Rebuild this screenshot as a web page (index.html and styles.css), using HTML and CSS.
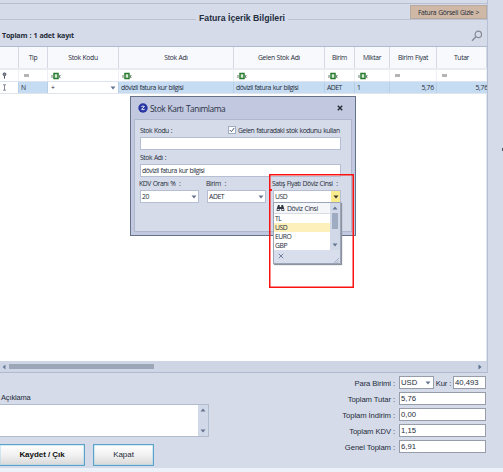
FILE: index.html
```html
<!DOCTYPE html>
<html lang="tr">
<head>
<meta charset="utf-8">
<title>Fatura İçerik Bilgileri</title>
<link rel="stylesheet" href="styles.css">
</head>
<body>
<svg class="defs" aria-hidden="true">
  <symbol id="abc" viewBox="0 0 10 8"><path d="M1 3v3M9.5 3.5h-1v2h1" stroke="#68806c" fill="none"/><rect x="3" y="1.5" width="4" height="5" fill="#d6ecd4" stroke="#287a30" stroke-width="1.5"/></symbol>
  <symbol id="down" viewBox="0 0 6 4"><path d="M.5 .5h5L3 3.5z" fill="currentColor"/></symbol>
  <symbol id="up" viewBox="0 0 6 4"><path d="M.5 3.5h5L3 .5z" fill="currentColor"/></symbol>
</svg>
<div class="app">
  <main class="main">
    <div class="topline"><button class="hide">Fatura Görseli Gizle &gt;</button></div>
    <h1 class="title"><span>Fatura İçerik Bilgileri</span></h1>
    <div class="summary"><b>Toplam : 1 adet kayıt</b>
      <svg class="search" viewBox="0 0 12 12"><circle cx="7.3" cy="4.4" r="3.2" fill="none" stroke="#858a94" stroke-width="1.2"/><path d="M5 6.8L1 10.8" stroke="#858a94" stroke-width="1.4"/></svg>
    </div>
    <section class="grid">
      <div class="row head"><span></span><span>Tip</span><span>Stok Kodu</span><span>Stok Adı</span><span>Gelen Stok Adı</span><span>Birim</span><span>Miktar</span><span>Birim Fiyat</span><span>Tutar</span></div>
      <div class="row filter">
        <span><svg class="pin" viewBox="0 0 5 7"><circle cx="2.5" cy="2.3" r="1.4" fill="#8b919b" stroke="#4b5361"/><path d="M2.5 4v2.6" stroke="#4b5361"/></svg></span>
        <span><i class="eq"></i></span><span><svg class="abc"><use href="#abc"/></svg></span><span><svg class="abc"><use href="#abc"/></svg></span><span><svg class="abc"><use href="#abc"/></svg></span><span><svg class="abc"><use href="#abc"/></svg></span><span><svg class="abc"><use href="#abc"/></svg></span><span><i class="eq"></i></span><span><i class="eq"></i></span>
      </div>
      <div class="row data">
        <span class="plain"><svg class="pin" viewBox="0 0 5 7"><path d="M1 .8h3M1 6.2h3M2.5 1v5" stroke="#6b7380" stroke-width=".8"/></svg></span>
        <span>N</span><span class="plain edit">+<svg class="arrow"><use href="#down"/></svg></span><span>dövizli fatura kur bilgisi</span><span>dövizli fatura kur bilgisi</span><span>ADET</span><span>1</span><span class="num">5,76</span><span class="num last">5,76</span>
      </div>
      <div class="space"></div>
      <div class="hscroll"><svg viewBox="0 0 4 6"><path d="M3.5 .5v5L.5 3z" fill="#687f9d"/></svg><i class="thumb"></i><svg viewBox="0 0 4 6"><path d="M.5 .5v5L3.5 3z" fill="#56708e"/></svg></div>
    </section>
    <section class="bottom">
      <div class="left">
        <label class="note-label">Açıklama</label>
        <div class="note"><i class="vbar"><svg class="arrow"><use href="#up"/></svg><svg class="arrow"><use href="#down"/></svg></i></div>
        <div class="buttons"><button class="save">Kaydet / Çık</button><button class="close">Kapat</button></div>
      </div>
      <div class="totals">
        <label>Para Birimi :</label><div class="pair"><div class="box cur">USD<svg class="arrow"><use href="#down"/></svg></div><span>Kur :</span><div class="box rate">40,493</div></div>
        <label>Toplam Tutar :</label><div class="box">5,76</div>
        <label>Toplam İndirim :</label><div class="box">0,00</div>
        <label>Toplam KDV :</label><div class="box">1,15</div>
        <label>Genel Toplam :</label><div class="box">6,91</div>
      </div>
    </section>
  </main>
  <aside class="side"><i class="collapse"></i></aside>
</div>
<div class="dialog">
  <div class="dtitle"><svg class="logo" viewBox="0 0 10 10"><circle cx="5" cy="5" r="4.7" fill="#2835a3"/><path d="M3.4 3.6Q5 2.6 6.4 3.5L3.6 6.3Q5 7.2 6.7 6.3" fill="none" stroke="#e9edff" stroke-width="1"/></svg><span>Stok Kartı Tanımlama</span><svg class="dx" viewBox="0 0 6 6"><path d="M.8 .8l4.4 4.4M5.2 .8L.8 5.2" stroke="#252c38" stroke-width="1.4"/></svg></div>
  <div class="panel">
    <div class="line"><label>Stok Kodu :</label><div class="check"><svg viewBox="0 0 8 8"><rect x=".5" y=".5" width="7" height="7" fill="#fff" stroke="#a0acc2"/><path d="M1.8 4l1.6 1.7L6.2 2" fill="none" stroke="#4b5870"/></svg><span>Gelen faturadaki stok kodunu kullan</span></div></div>
    <div class="field code"></div>
    <label class="name-label">Stok Adı :</label>
    <div class="field">dövizli fatura kur bilgisi</div>
    <div class="three">
      <div><label>KDV Oranı % &nbsp;:</label><div class="select">20<svg class="arrow"><use href="#down"/></svg></div></div>
      <div><label>Birim &nbsp;:</label><div class="select">ADET<svg class="arrow"><use href="#down"/></svg></div></div>
      <div><label>Satış Fiyatı Döviz Cinsi &nbsp;:</label><div class="select wide">USD<b class="drop"><svg class="arrow"><use href="#down"/></svg></b></div></div>
    </div>
  </div>
</div>
<div class="menu">
  <div class="menu-body">
    <div class="options"><div class="mh"><svg viewBox="0 0 9 8"><path d="M2 1h1.7v2h1.6V1H7l1.3 4v2H5.4V5H3.6v2H.7V5z" fill="#303743"/><path d="M1.4 5.7h1.5M6.1 5.7h1.5" stroke="#f4f6fa" stroke-width="1.2"/></svg><span>Döviz Cinsi</span></div><div>TL</div><div class="selected">USD</div><div>EURO</div><div>GBP</div></div>
    <i class="menu-scroll"><svg class="arrow"><use href="#up"/></svg><b></b><svg class="arrow"><use href="#down"/></svg></i>
  </div>
  <div class="menu-foot"><svg class="mx" viewBox="0 0 6 6"><path d="M.8 .8l4.4 4.4M5.2 .8L.8 5.2" stroke="#73829b"/></svg><svg class="grip" viewBox="0 0 6 6"><path d="M0 6L6 0M3 6l3-3" stroke="#98a2b5"/></svg></div>
</div>
<div class="mark"><i class="dot"></i></div>
</body>
</html>
```
FILE: styles.css
```css
*{box-sizing:border-box}
body{margin:0;width:503px;height:472px;overflow:hidden;background:#d5dbe9;color:#252c3a;font:6.8px/9px "Open Sans","Noto Sans",sans-serif;letter-spacing:-.47px;word-spacing:.5px}
svg{display:block;flex:none}
i{font-style:normal}
button{font:inherit;letter-spacing:inherit;word-spacing:inherit;color:inherit;padding:0;margin:0}
span,label,b{white-space:nowrap}
.defs{position:absolute;width:0;height:0}
.arrow{width:6px;height:4px;color:#64748f}
.app{display:flex;height:472px;border-bottom:4px solid #ecf1fa}
.main{width:487px;flex:none;padding-top:3px;display:flex;flex-direction:column}
.side{flex:1;border-left:1px solid #b7bfd2;height:373px;display:flex;justify-content:flex-end}
.collapse{width:1px;height:3px;background:#4c5668;margin-top:148px}
.topline{height:15px;border-top:1px solid #b7bfd2;display:flex;justify-content:flex-end}
.hide{width:77px;height:14px;margin-top:1px;border:1px solid #b9a99d;background:#cfb8a5;line-height:11px;letter-spacing:-.35px}
.title{margin:-4px 0 5px;height:10px;display:flex;align-items:center;font:bold 8.7px/10px "Liberation Sans",sans-serif;letter-spacing:0;word-spacing:0;color:#232d40}
.title:before{content:"";width:196px;border-top:1px solid #bac2d4}
.title:after{content:"";flex:1;border-top:1px solid #bac2d4;margin-left:1px}
.title span{width:88px;margin-left:3px;margin-top:-2px}
.summary{height:17px;display:flex;justify-content:space-between;padding:2px 4px 0 2px}
.summary b{font-size:7.2px;letter-spacing:-.26px;word-spacing:.6px}
.search{width:12px;height:12px;margin-top:-1px}
.grid{height:327px;flex:none;border-top:1px solid #b1bbcf;border-bottom:1px solid #b1bbcf;display:flex;flex-direction:column;overflow:hidden}
.row{display:grid;grid-template-columns:19px 29px 71px 115px 91px 30px 35px 47px 50px;flex:none}
.row>span{display:flex;align-items:center;border-right:1px solid #d4d9e3;overflow:hidden}
.head{height:23px;background:#f8f9fd;border-bottom:2px solid #e9ebf1;letter-spacing:-.36px}
.head>span{justify-content:center}
.filter{height:11px;background:#fff}
.filter>span,.data>span{padding-left:2px}
.filter>span{border-color:#edf0f5}
.abc{width:10px;height:8px;margin-left:1px}
.eq{width:5px;height:3px;background:#b4b4b4;margin-left:3px}
.pin{width:5px;height:7px}
.data{height:13px;background:#c5dcf3;border-bottom:1px solid #e0e4ec;border-top:1px solid #dbe4f0}
.data>span{border-color:#b7cfe4}
.data .plain{background:#fff}
.data .edit{justify-content:space-between;padding:0 2px 0 3px}
.data .num{justify-content:flex-end;padding-right:2px;letter-spacing:-.2px}
.data .last{padding-right:0;margin-right:-2px}
.space{flex:1;background:#fff;border-right:1px solid #dfe3ed}
.hscroll{height:11px;display:flex;align-items:center;background:#ced6e6;padding:0 5px 0 2px}
.hscroll svg{width:4px;height:6px}
.thumb{width:145px;height:5px;background:#9ba6b8;margin:0 auto 0 3px}
.bottom{display:flex;justify-content:space-between;height:95px;font-family:"Liberation Sans",sans-serif;word-spacing:0}
.left{padding-top:20px}
.note-label{display:block;height:11px;padding-left:1px;font-size:7.5px;letter-spacing:-.15px;line-height:9px}
.note{width:209px;height:33px;border:1px solid #b2bccf;border-left:0;background:#fff;display:flex;justify-content:flex-end}
.vbar{width:10px;background:#d1d9e8;display:flex;flex-direction:column;justify-content:space-between;align-items:center;padding:3px 0}
.buttons{display:flex;gap:8px;margin-top:7px}
.buttons button{height:22px;border:1px solid #5ca2c8;box-shadow:inset 0 0 0 .5px #a9d6eb;background:linear-gradient(#fff,#f1f1f1 50%,#d8d8d8);font:8px/18px "Liberation Sans",sans-serif;letter-spacing:-.05px}
.buttons .save{width:85px;border-left:0;font-weight:bold;color:#111}
.buttons .close{width:61px}
.totals{display:grid;grid-template-columns:auto 87px;grid-auto-rows:13px;row-gap:3px;column-gap:4px;padding:3px 1px 0 0;align-content:start;font-size:7.7px;letter-spacing:-.1px}
.totals label{text-align:right;padding-top:3px}
.box{height:13px;border:1px solid #979da8;background:#fff;padding:1px;line-height:9px;letter-spacing:0}
.pair{display:flex;justify-content:space-between}
.pair span{padding-top:3px}
.cur{width:35px;display:flex;align-items:center;justify-content:space-between;padding-right:2px}
.rate{width:33px}
.dialog{position:absolute;left:130px;top:96px;width:226px;height:140px;background:#c2c8df;border:1px solid #66718a;padding:0 3px 3px}
.dtitle{height:22px;display:flex;align-items:center;padding:0 9px 0 4px}
.dtitle span{font-size:8.4px;letter-spacing:-.47px;word-spacing:.7px;margin-left:2px;color:#2b3348}
.logo{width:10px;height:10px}
.dx{width:6px;height:6px;margin-left:auto}
.panel{height:113px;border:1px solid #aeb7cc;background:#d5dbe9;padding:6px 10px 0 5px;letter-spacing:-.42px}
.line{display:flex;justify-content:space-between;height:11px}
.check{display:flex;gap:2px;width:113px;letter-spacing:-.43px}
.check svg{width:8px;height:8px}
.field{height:13px;border:1px solid #b5bed2;background:#fff;padding:1px;letter-spacing:-.47px}
.name-label{display:block;height:14px;padding-top:3px}
.three{display:grid;grid-template-columns:67px 66px 68px;padding-top:2px}
.three label{display:block;height:11px;margin-left:-1px}
.select{width:59px;height:13px;border:1px solid #b5bed2;background:#fff;display:flex;align-items:center;justify-content:space-between;padding:0 1px}
.select.wide{width:68px}
.drop{height:11px;width:9px;margin-right:-1px;background:#faeb8c;display:flex;align-items:center;justify-content:center}
.drop .arrow{color:#333}
.menu{position:absolute;left:273px;top:202px;width:68px;height:62px;border:1px solid #9ba5b8;background:#d8deeb;box-shadow:1px 1px 1px #8d939e}
.menu-body{display:flex;height:47px;background:#fff}
.options{flex:1}
.options>div{height:9px;padding-left:1px}
.options .mh{height:11px;background:#f4f6fa;border-bottom:1px solid #d7dce6;display:flex;align-items:center;gap:2px;letter-spacing:-.35px}
.mh svg{width:9px;height:8px;margin-left:1px}
.options .selected{background:#fdf0ba}
.menu-scroll{width:10px;background:#d1d9e8;display:flex;flex-direction:column;align-items:center;padding:3px 0;justify-content:space-between}
.menu-scroll b{width:6px;height:16px;background:#9eabc0;margin-bottom:12px}
.menu-foot{height:13px;display:flex;justify-content:space-between;padding:3px 1px 0 4px}
.mx{width:6px;height:6px}
.grip{width:5px;height:5px;align-self:flex-end}
.mark{position:absolute;left:269px;top:174px;width:85px;height:114px;border:1px solid #fa1212;box-shadow:inset 0 0 0 .5px #fa1212}
.dot{display:block;width:2px;height:2px;margin-top:14px;background:#fa1212}
```
